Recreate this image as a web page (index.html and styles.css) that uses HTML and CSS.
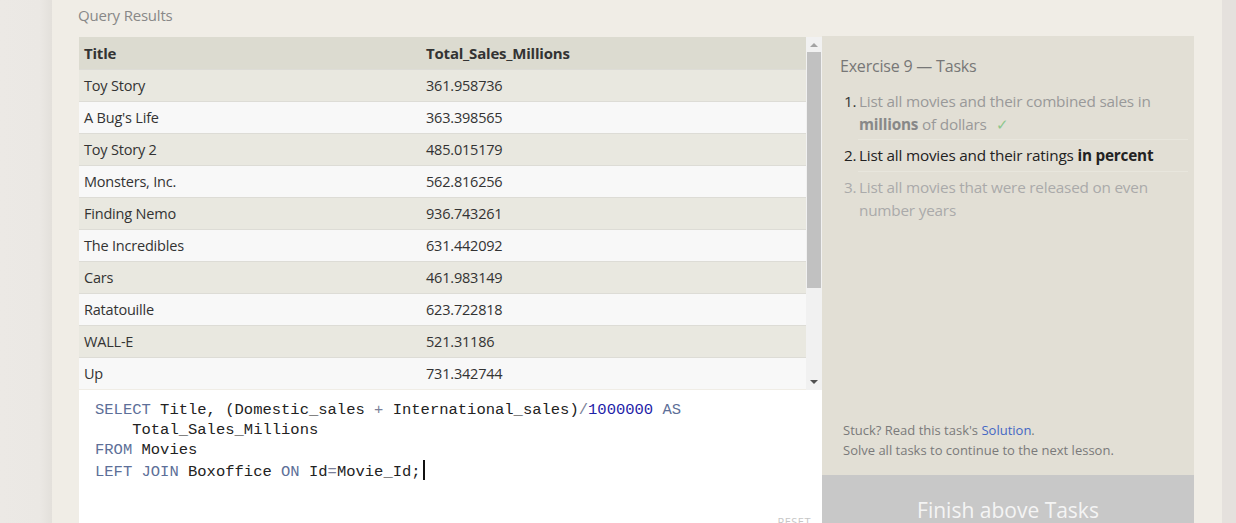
FILE: index.html
```html
<!DOCTYPE html>
<html>
<head>
<meta charset="utf-8">
<link rel="stylesheet" href="styles.css">
</head>
<body>
<div class="gutter-left"></div>
<main class="panel">
  <h2 class="panel-title">Query Results</h2>
  <div class="workspace">
    <section class="left">
      <div class="results">
        <div class="table-wrap">
          <table class="grid">
            <thead><tr><th class="c1">Title</th><th>Total_Sales_Millions</th></tr></thead>
            <tbody>
              <tr><td>Toy Story</td><td>361.958736</td></tr>
              <tr><td>A Bug's Life</td><td>363.398565</td></tr>
              <tr><td>Toy Story 2</td><td>485.015179</td></tr>
              <tr><td>Monsters, Inc.</td><td>562.816256</td></tr>
              <tr><td>Finding Nemo</td><td>936.743261</td></tr>
              <tr><td>The Incredibles</td><td>631.442092</td></tr>
              <tr><td>Cars</td><td>461.983149</td></tr>
              <tr><td>Ratatouille</td><td>623.722818</td></tr>
              <tr><td>WALL-E</td><td>521.31186</td></tr>
              <tr><td>Up</td><td>731.342744</td></tr>
            </tbody>
          </table>
        </div>
        <div class="scrollbar">
          <div class="arrow up"></div>
          <div class="thumb"></div>
          <div class="arrow down"></div>
        </div>
      </div>
      <div class="editor">
<pre class="code"><span class="kw">SELECT</span> Title, (Domestic_sales <span class="op">+</span> International_sales)<span class="op">/</span><span class="num">1000000</span> <span class="kw">AS</span>
    Total_Sales_Millions
<span class="kw">FROM</span> Movies
<span class="kw">LEFT JOIN</span> Boxoffice <span class="kw">ON</span> Id<span class="op">=</span>Movie_Id;<span class="caret"></span></pre>
        <div class="reset">RESET</div>
      </div>
    </section>
    <aside class="tasks">
      <div class="tasks-body">
        <h3 class="tasks-title">Exercise 9 — Tasks</h3>
        <ol class="task-list">
          <li class="done"><span class="n">1.</span><span class="t">List all movies and their combined sales in <b>millions</b> of dollars <span class="check">✓</span></span></li>
          <li class="current"><span class="n">2.</span><span class="t">List all movies and their ratings <b>in percent</b></span></li>
          <li class="todo"><span class="n">3.</span><span class="t">List all movies that were released on even number years</span></li>
        </ol>
        <div class="hint">
          <p>Stuck? Read this task's <a class="link">Solution</a>.</p>
          <p>Solve all tasks to continue to the next lesson.</p>
        </div>
      </div>
      <div class="finish">Finish above Tasks</div>
    </aside>
  </div>
</main>
<div class="gutter-right"></div>
</body>
</html>
```
FILE: styles.css
```css
html, body { margin: 0; padding: 0; }
body {
  width: 1236px;
  height: 523px;
  overflow: hidden;
  display: flex;
  background: #e5e1dd;
  font-family: "Open Sans", "Noto Sans", sans-serif;
}
.gutter-left {
  width: 52px;
  flex: none;
  background: linear-gradient(to right, #ece9e5 0, #ebe8e4 40px, #e3e0db 52px);
}
.gutter-right {
  flex: 1;
  background: #e5e1dd;
}
.panel {
  width: 1170px;
  flex: none;
  background: #f0ede6;
  padding: 0 28px 0 26px;
  box-sizing: border-box;
}
.panel-title {
  margin: 0;
  height: 36px;
  padding-top: 4px;
  box-sizing: border-box;
  font-size: 15px;
  font-weight: 400;
  color: #888;
  line-height: 22px;
  letter-spacing: -0.2px;
}
.workspace {
  display: flex;
  padding-left: 1px;
}
.left {
  width: 743px;
  flex: none;
  display: flex;
  flex-direction: column;
  padding-top: 1px;
}
.results {
  display: flex;
  height: 353px;
  overflow: hidden;
}
.table-wrap {
  width: 727px;
  flex: none;
}
.grid {
  width: 100%;
  border-collapse: collapse;
  font-size: 14.5px;
  color: #333;
  letter-spacing: -0.2px;
}
.grid th, .grid td {
  height: 32px;
  padding: 0 5px;
  text-align: left;
  box-sizing: border-box;
}
.grid th {
  background: #dcdbd0;
  font-weight: 700;
  font-size: 15px;
  color: #333;
}
.grid .c1 { width: 342px; }
.grid tbody tr td { border-top: 1px solid #dddcd6; }
.grid tbody tr:nth-child(odd) { background: #e9e8e0; }
.grid tbody tr:nth-child(even) { background: #f8f8f8; }
.scrollbar {
  width: 16px;
  flex: none;
  background: #f1f1f1;
  display: flex;
  flex-direction: column;
  align-items: center;
}
.arrow {
  width: 0; height: 0;
  border-left: 4px solid transparent;
  border-right: 4px solid transparent;
}
.arrow.up { border-bottom: 4px solid #a3a3a3; margin: 6px 0 5px; }
.arrow.down { border-top: 4px solid #505050; margin-top: auto; margin-bottom: 6px; }
.thumb {
  width: 14px;
  height: 236px;
  background: #c1c1c1;
}
.editor {
  background: #fff;
  height: 140px;
  position: relative;
}
.code {
  margin: 0;
  padding: 10px 0 0 16px;
  font-family: "Liberation Mono", "DejaVu Sans Mono", monospace;
  font-size: 15.5px;
  line-height: 20px;
  color: #222;
}
.kw { color: #5d6f98; }
.op { color: #7a7f99; }
.num { color: #1e22a8; }
.caret {
  display: inline-block;
  width: 2px;
  height: 20px;
  background: #111;
  vertical-align: -4px;
  margin-left: 2px;
}
.reset {
  position: absolute;
  right: 11px;
  top: 124px;
  font-size: 11px;
  color: #c6c6c6;
  letter-spacing: 0.5px;
}
.tasks {
  width: 372px;
  flex: none;
  background: #e2dfd5;
  display: flex;
  flex-direction: column;
  height: 500px;
}
.tasks-body {
  flex: 1;
  padding: 18px 6px 0 18px;
  display: flex;
  flex-direction: column;
}
.tasks-title {
  margin: 0 0 8px;
  font-size: 16px;
  font-weight: 400;
  color: #777;
  line-height: 24px;
  letter-spacing: -0.2px;
}
.task-list {
  list-style: none;
  margin: 0;
  padding: 0 0 0 4px;
  font-size: 15.3px;
  letter-spacing: -0.2px;
}
.task-list li {
  display: flex;
  line-height: 23px;
  padding: 4px 0 5px;
}
.task-list li.done { padding-bottom: 4px; }
.task-list li .n { width: 15px; flex: none; }
.task-list li .t { flex: 1; }
.task-list li.done, .task-list li.current { position: relative; }
.task-list li.done::after, .task-list li.current::after {
  content: "";
  position: absolute;
  left: 14px;
  right: 0;
  bottom: 0;
  border-bottom: 1px solid #e8e6dd;
}
.done .n { color: #333; }
.done .t { color: #999; }
.done b { color: #888; }
.check { color: #8dc78d; margin-left: 6px; }
.current { color: #222; }
.current b { color: #222; }
.todo { color: #aaa; }
.hint {
  margin-top: auto;
  padding: 0 0 15px 3px;
  font-size: 13px;
  line-height: 20px;
  color: #7a7a7a;
}
.hint p { margin: 0; }
.link { color: #4467c4; }
.finish {
  height: 41px;
  flex: none;
  background: #c8c8c8;
  color: #f4f4f4;
  font-size: 21px;
  text-align: center;
  padding-top: 20px;
  line-height: 30px;
}
```
